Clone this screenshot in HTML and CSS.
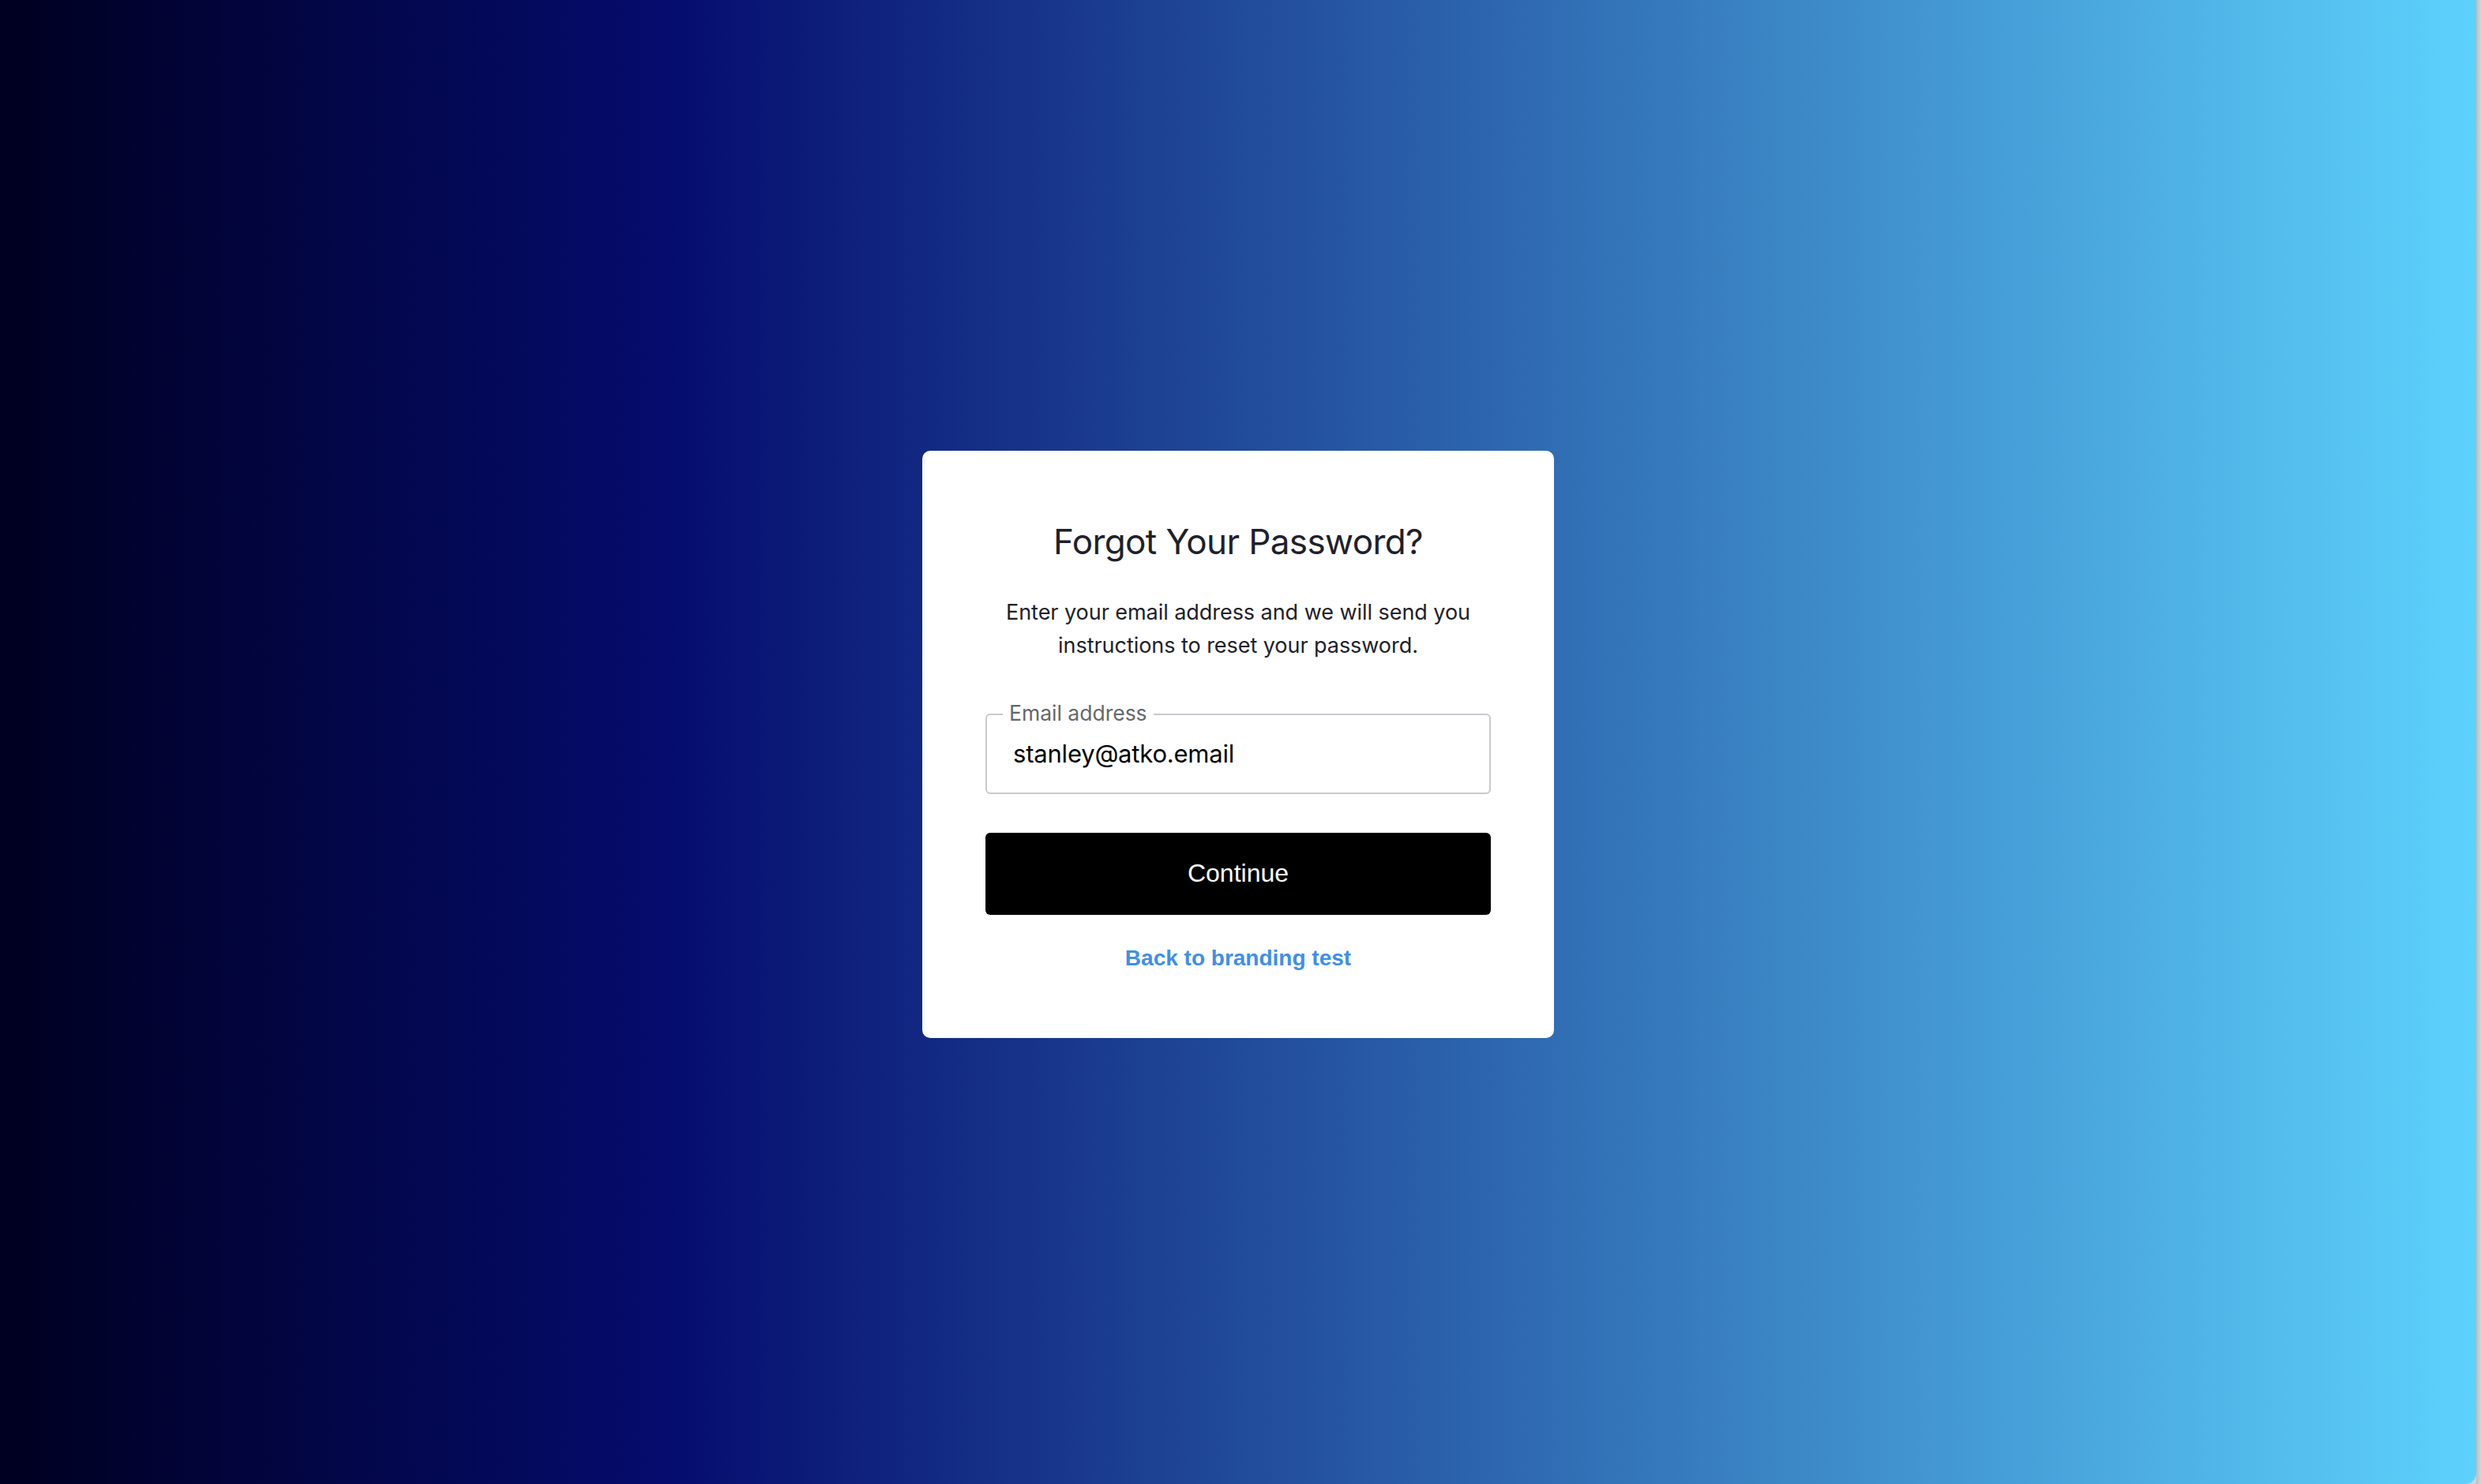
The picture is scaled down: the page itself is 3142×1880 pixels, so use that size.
FILE: index.html
```html
<!DOCTYPE html>
<html lang="en">
<head>
<meta charset="utf-8">
<title>Forgot Your Password?</title>
<link rel="stylesheet" href="styles.css">
</head>
<body>
<div class="window">
  <main class="stage">
    <section class="card">
      <h1 class="title">Forgot Your Password?</h1>
      <p class="desc">Enter your email address and we will send you instructions to reset your password.</p>
      <div class="field">
        <span class="field-label">Email address</span>
        <span class="field-value">stanley@atko.email</span>
      </div>
      <button class="btn" type="button">Continue</button>
      <a class="back-link" href="#">Back to branding test</a>
    </section>
  </main>
  <div class="edge"></div>
</div>
</body>
</html>
```
FILE: styles.css
```css
html, body {
  margin: 0;
  padding: 0;
  height: 100%;
}
body {
  background: #d2d2d2;
  font-family: Inter, "Noto Sans", sans-serif;
}
.window {
  display: flex;
  height: 100vh;
}
.stage {
  flex: 1;
  display: flex;
  align-items: center;
  justify-content: center;
  background: linear-gradient(90deg, #000020 0%, #050c6d 27%, #5dd2fd 100%);
  border-bottom-right-radius: 14px;
}
.edge {
  width: 6px;
  background: linear-gradient(90deg, #bdbdbd, #d6d6d6);
}
.card {
  box-sizing: border-box;
  width: 800px;
  background: #fff;
  border-radius: 10px;
  padding: 86px 80px 80px;
  display: flex;
  flex-direction: column;
  align-items: stretch;
  text-align: center;
  margin-top: 5px;
}
.title {
  margin: 0;
  font-family: Inter, "Noto Sans", sans-serif;
  font-weight: 400;
  font-size: 44px;
  line-height: 58px;
  letter-spacing: -0.6px;
  color: #1e212a;
}
.desc {
  margin: 40px 0 0;
  font-size: 27px;
  line-height: 42px;
  color: #1e212a;
  letter-spacing: -0.05px;
  padding: 0 12px;
}
.field {
  position: relative;
  margin-top: 65px;
  height: 102px;
  box-sizing: border-box;
  border: 2px solid #c9cace;
  border-radius: 6px;
  display: flex;
  align-items: center;
  padding-left: 33px;
  text-align: left;
}
.field-label {
  position: absolute;
  left: 20px;
  top: -18px;
  padding: 0 8px;
  background: #fff;
  font-size: 26.5px;
  line-height: 30px;
  color: #65676e;
}
.field-value {
  font-size: 31px;
  color: #000;
  letter-spacing: -0.2px;
}
.btn {
  margin-top: 49px;
  height: 104px;
  border: 0;
  border-radius: 6px;
  background: #000;
  color: #fff;
  font-family: "Liberation Sans", Arial, sans-serif;
  font-size: 32px;
  cursor: pointer;
}
.back-link {
  margin-top: 34px;
  font-family: "Liberation Sans", Arial, sans-serif;
  font-weight: 700;
  font-size: 28px;
  line-height: 42px;
  color: #3f8fe8;
  text-decoration: none;
}
```
